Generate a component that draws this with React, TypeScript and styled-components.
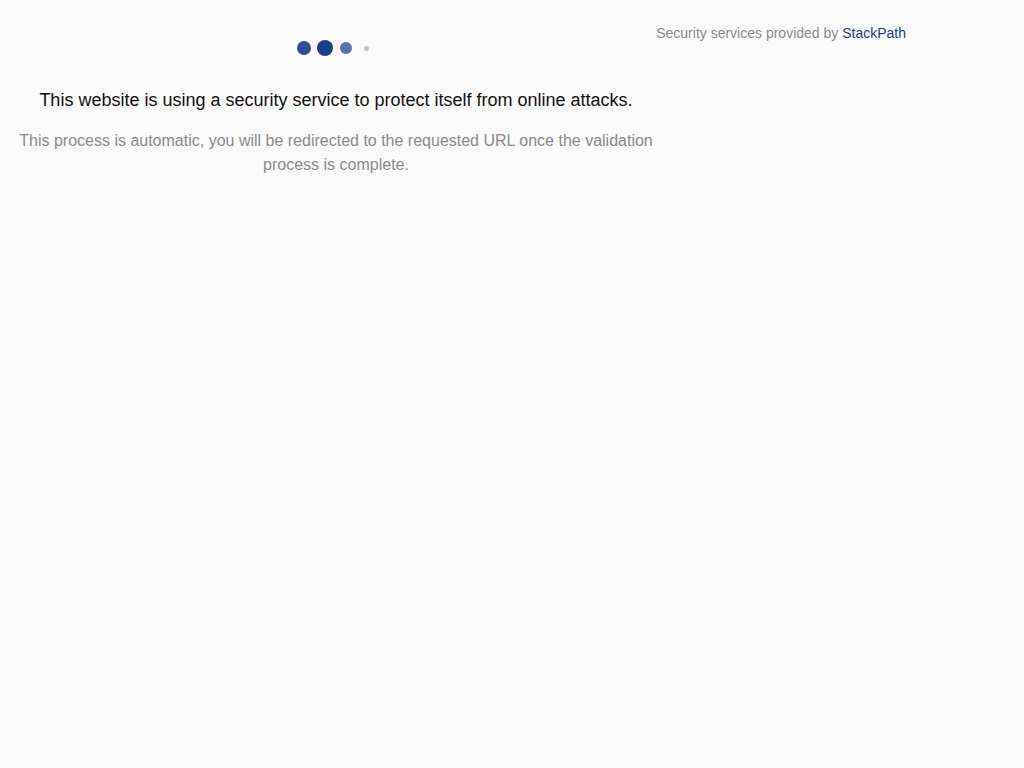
import React from "react";
import styled, { createGlobalStyle } from "styled-components";

const GlobalStyle = createGlobalStyle`
  html, body {
    margin: 0;
    padding: 0;
    background: #fafafa;
    font-family: "Liberation Sans", Arial, sans-serif;
  }
`;

const Page = styled.div`
  display: flex;
  min-height: 768px;
  background: #fafafa;
`;

const Main = styled.main`
  width: 672px;
  flex-shrink: 0;
  padding-top: 40px;
  text-align: center;
`;

const Dots = styled.div`
  display: flex;
  justify-content: center;
  align-items: center;
  height: 16px;
  padding-right: 2px;
`;

const Dot = styled.span<{ size: number; color: string }>`
  display: flex;
  align-items: center;
  justify-content: center;
  width: 21px;

  &::before {
    content: "";
    display: block;
    width: ${(p) => p.size}px;
    height: ${(p) => p.size}px;
    border-radius: 50%;
    background: ${(p) => p.color};
  }
`;

const Heading = styled.h1`
  margin: 32px 0 0;
  font-size: 18px;
  font-weight: 400;
  line-height: 24px;
  color: #111;
`;

const Note = styled.p`
  margin: 17px 0 0;
  padding: 0 16px;
  font-size: 16px;
  line-height: 24px;
  color: #8a8a8a;
`;

const Aside = styled.aside`
  flex: 1;
  min-width: 0;
  display: flex;
  justify-content: flex-end;
  align-items: flex-start;
  padding: 25px 118px 0 0;
`;

const Credit = styled.span`
  flex-shrink: 0;
  white-space: nowrap;
  font-size: 14px;
  line-height: 16px;
  color: #8a8a8a;
`;

const Brand = styled.a`
  color: #1f3a7e;
  text-decoration: none;
`;

const dots = [
  { size: 14, color: "#2d4a93" },
  { size: 16, color: "#1f3b8c" },
  { size: 12, color: "#5a6fae" },
  { size: 5, color: "#bcc1cf" },
];

export default function App() {
  return (
    <>
      <GlobalStyle />
      <Page>
        <Main>
          <Dots>
            {dots.map((d, i) => (
              <Dot key={i} size={d.size} color={d.color} />
            ))}
          </Dots>
          <Heading>
            This website is using a security service to protect itself from online attacks.
          </Heading>
          <Note>
            This process is automatic, you will be redirected to the requested URL once the
            validation process is complete.
          </Note>
        </Main>
        <Aside>
          <Credit>
            Security services provided by <Brand href="#">StackPath</Brand>
          </Credit>
        </Aside>
      </Page>
    </>
  );
}
